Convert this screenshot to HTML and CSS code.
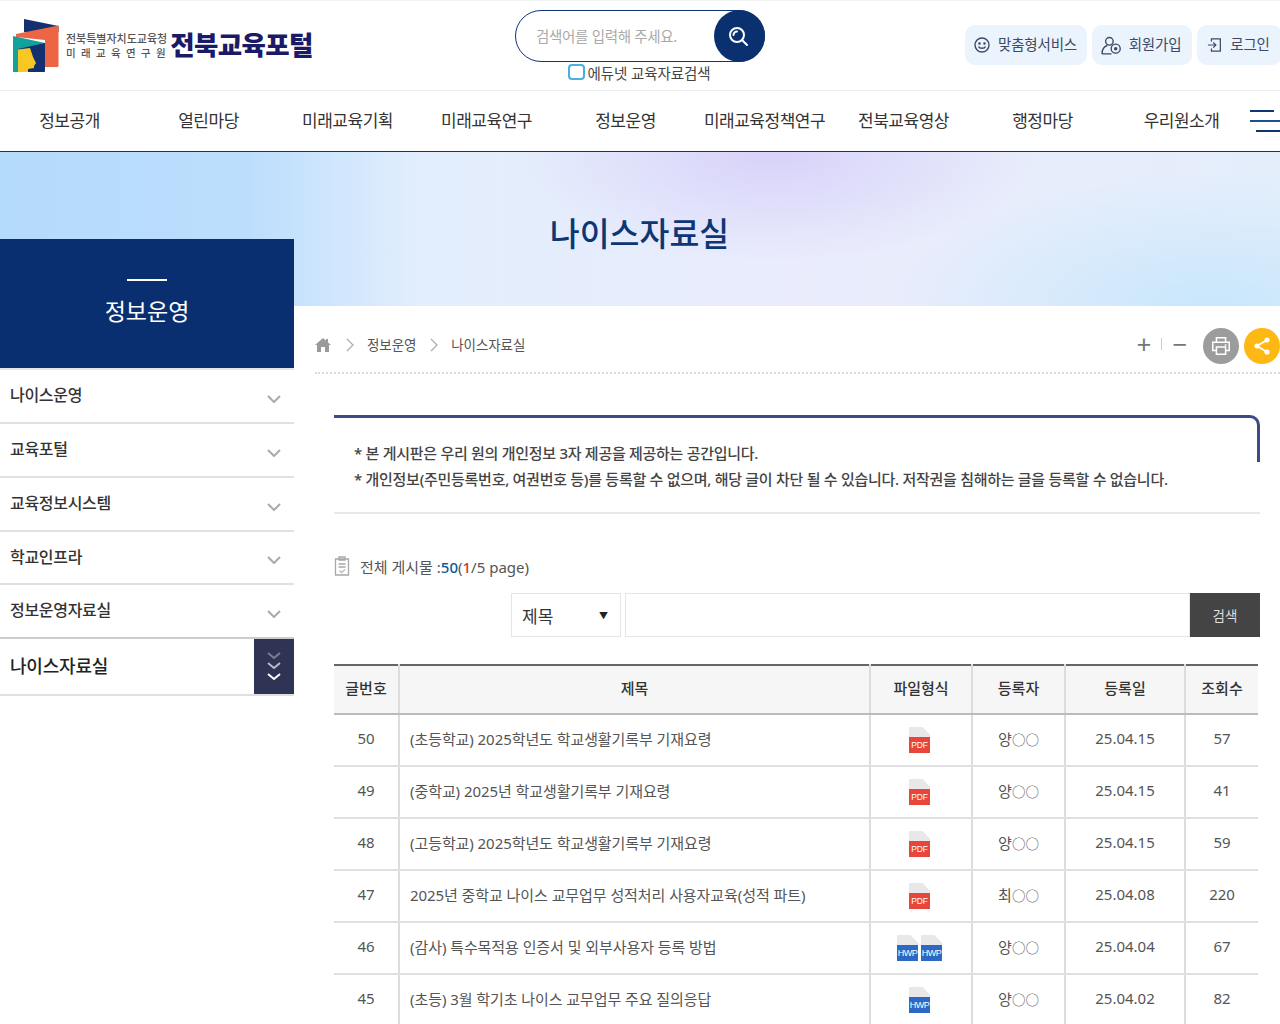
FILE: index.html
```html
<!DOCTYPE html>
<html lang="ko">
<head>
<meta charset="utf-8">
<title>나이스자료실 - 전북교육포털</title>
<link rel="stylesheet" href="styles.css">
</head>
<body>
<header class="top">
  <a class="logo">
    <svg class="logo-mark" viewBox="12 18 48 56" width="48" height="56">
      <path d="M24 19 58.5 26V32H24Z" fill="#14306f"/>
      <path d="M16 34 58.5 25.5V66Q58.5 67 57 67H45V40L16 37Z" fill="#ec6545"/>
      <path d="M13 36 45 43V72H13Z" fill="#14a09b"/>
      <path d="M18 49 45 43V71Q45 72 43 72H18Z" fill="#14306f"/>
      <path d="M18 49.5 30 48 33 57 36 63 34 66V68L28 69V72H18Z" fill="#f7c823"/>
    </svg>
    <span class="logo-sub"><span>전북특별자치도교육청</span><span class="spaced">미 래 교 육 연 구 원</span></span>
    <span class="logo-name">전북교육포털</span>
  </a>
  <div class="search-col">
    <div class="search-pill">
      <span class="search-ph">검색어를 입력해 주세요.</span>
      <span class="search-btn">
        <svg viewBox="0 0 24 24" width="24" height="24" fill="none" stroke="#fff" stroke-width="2"><circle cx="11" cy="11" r="7"/><path d="M16 16l5 5M7.5 11a3.5 3.5 0 0 1 3.5-3.5" stroke-linecap="round"/></svg>
      </span>
    </div>
    <label class="edu"><span class="check"></span>에듀넷 교육자료검색</label>
  </div>
  <div class="quick">
    <a class="q q1"><svg viewBox="0 0 18 18" width="18" height="18" fill="none" stroke="#3c4a68" stroke-width="1.4"><circle cx="9" cy="9" r="7"/><circle cx="6.5" cy="7.5" r=".6"/><circle cx="11.5" cy="7.5" r=".6"/><path d="M5.5 10.5c1 2.4 6 2.4 7 0"/></svg>맞춤형서비스</a>
    <a class="q q2"><svg viewBox="0 0 20 18" width="21" height="19" fill="none" stroke="#3c4a68" stroke-width="1.3"><circle cx="8" cy="5" r="3.6"/><path d="M1 17c0-4 2-7 5-8M1 17h9"/><circle cx="14" cy="12" r="4.3"/><circle cx="14" cy="12" r="1" fill="#3c4a68"/></svg>회원가입</a>
    <a class="q q3"><svg viewBox="0 0 18 18" width="16" height="16" fill="none" stroke="#3c4a68" stroke-width="1.4"><path d="M5 5V2h10v14H5v-3M1 9h9M7 6l3 3-3 3"/></svg>로그인</a>
  </div>
</header>
<nav class="gnb">
  <a>정보공개</a><a>열린마당</a><a>미래교육기획</a><a>미래교육연구</a><a>정보운영</a><a>미래교육정책연구</a><a>전북교육영상</a><a>행정마당</a><a>우리원소개</a>
  <span class="burger"><i></i><i></i><i></i></span>
</nav>
<section class="hero"><h1>나이스자료실</h1></section>
<div class="layout">
  <aside class="side">
    <div class="side-title"><i></i><strong>정보운영</strong></div>
    <ul class="side-menu">
      <li><span>나이스운영</span><svg class="chev" viewBox="0 0 14 8" width="14" height="8"><path d="M1 1l6 6 6-6"/></svg></li>
      <li><span>교육포털</span><svg class="chev" viewBox="0 0 14 8" width="14" height="8"><path d="M1 1l6 6 6-6"/></svg></li>
      <li><span>교육정보시스템</span><svg class="chev" viewBox="0 0 14 8" width="14" height="8"><path d="M1 1l6 6 6-6"/></svg></li>
      <li><span>학교인프라</span><svg class="chev" viewBox="0 0 14 8" width="14" height="8"><path d="M1 1l6 6 6-6"/></svg></li>
      <li><span>정보운영자료실</span><svg class="chev" viewBox="0 0 14 8" width="14" height="8"><path d="M1 1l6 6 6-6"/></svg></li>
      <li class="on"><span>나이스자료실</span><b><svg viewBox="0 0 14 32" width="14" height="32" fill="none" stroke-width="2"><path d="M1 2l6 5 6-5" stroke="#7b7d94"/><path d="M1 12l6 5 6-5" stroke="#b9bac6"/><path d="M1 23l6 5 6-5" stroke="#fff"/></svg></b></li>
    </ul>
  </aside>
  <main class="main">
    <div class="crumbs">
      <svg class="home" viewBox="0 0 16 14" width="16" height="14"><path d="M8 0 0 7h2v7h4V9h4v5h4V7h2l-3-2.6V1h-2v1.7Z" fill="#9a9a9a"/></svg>
      <svg class="sep" viewBox="0 0 8 14" width="8" height="14"><path d="M1 1l6 6-6 6"/></svg>
      <span>정보운영</span>
      <svg class="sep" viewBox="0 0 8 14" width="8" height="14"><path d="M1 1l6 6-6 6"/></svg>
      <span>나이스자료실</span>
      <div class="tools">
        <span class="zoom">+</span><i class="zoom-sep"></i><span class="zoom">−</span>
        <span class="round print"><svg viewBox="0 0 24 24" width="22" height="22" fill="none" stroke="#fff" stroke-width="1.6"><path d="M7 8V3h10v5M7 17H3V8h18v9h-4M7 13h10v8H7Z"/><path d="M16 11h2"/></svg></span>
        <span class="round share"><svg viewBox="0 0 20 20" width="20" height="20" fill="#fff" stroke="#fff" stroke-width="1.8"><path d="M15 4 5 10l10 6" fill="none"/><circle cx="15" cy="4" r="1.7"/><circle cx="5" cy="10" r="1.7"/><circle cx="15" cy="16" r="1.7"/></svg></span>
      </div>
    </div>
    <div class="content">
      <div class="notice">
        <p>* 본 게시판은 우리 원의 개인정보 3자 제공을 제공하는 공간입니다.</p>
        <p>* 개인정보(주민등록번호, 여권번호 등)를 등록할 수 없으며, 해당 글이 차단 될 수 있습니다. 저작권을 침해하는 글을 등록할 수 없습니다.</p>
      </div>
      <div class="count">
        <svg viewBox="0 0 16 20" width="16" height="20" fill="none" stroke="#a8a8a8" stroke-width="1.3"><path d="M1.5 3h13v16h-13ZM5 1h6v3H5ZM4.5 8h7M4.5 11h7"/><path d="M5.5 14.5l2 2 3.5-3" stroke="#bbb"/></svg>
        <span>전체 게시물 :<em class="blue">50</em>(<em class="red">1</em>/5 page)</span>
      </div>
      <div class="filter">
        <div class="select"><span>제목</span><i>▼</i></div>
        <div class="field"></div>
        <a class="go">검색</a>
      </div>
      <table class="board">
        <colgroup><col class="c1"><col><col class="c3"><col class="c4"><col class="c5"><col class="c6"></colgroup>
        <thead><tr><th>글번호</th><th>제목</th><th>파일형식</th><th>등록자</th><th>등록일</th><th>조회수</th></tr></thead>
        <tbody>
          <tr><td>50</td><td class="tl">(초등학교) 2025학년도 학교생활기록부 기재요령</td><td><span class="file"><span class="doc pdf"><i>PDF</i></span></span></td><td>양<span class="mask">○○</span></td><td>25.04.15</td><td>57</td></tr>
          <tr><td>49</td><td class="tl">(중학교) 2025년 학교생활기록부 기재요령</td><td><span class="file"><span class="doc pdf"><i>PDF</i></span></span></td><td>양<span class="mask">○○</span></td><td>25.04.15</td><td>41</td></tr>
          <tr><td>48</td><td class="tl">(고등학교) 2025학년도 학교생활기록부 기재요령</td><td><span class="file"><span class="doc pdf"><i>PDF</i></span></span></td><td>양<span class="mask">○○</span></td><td>25.04.15</td><td>59</td></tr>
          <tr><td>47</td><td class="tl">2025년 중학교 나이스 교무업무 성적처리 사용자교육(성적 파트)</td><td><span class="file"><span class="doc pdf"><i>PDF</i></span></span></td><td>최<span class="mask">○○</span></td><td>25.04.08</td><td>220</td></tr>
          <tr><td>46</td><td class="tl">(감사) 특수목적용 인증서 및 외부사용자 등록 방법</td><td><span class="file"><span class="doc hwp"><i>HWP</i></span><span class="doc hwp"><i>HWP</i></span></span></td><td>양<span class="mask">○○</span></td><td>25.04.04</td><td>67</td></tr>
          <tr><td>45</td><td class="tl">(초등) 3월 학기초 나이스 교무업무 주요 질의응답</td><td><span class="file"><span class="doc hwp"><i>HWP</i></span></span></td><td>양<span class="mask">○○</span></td><td>25.04.02</td><td>82</td></tr>
        </tbody>
      </table>
    </div>
  </main>
</div>
</body>
</html>
```

FILE: styles.css
```css
* { box-sizing: border-box; }
html, body { margin: 0; padding: 0; }
body { width: 1280px; height: 1024px; overflow: hidden; background: #fff; color: #333; font-family: "Noto Sans", "Noto Sans CJK KR", sans-serif; font-size: 15px; }
i, em { font-style: normal; }
ul { list-style: none; margin: 0; padding: 0; }
p { margin: 0; }

.top { height: 91px; display: flex; align-items: flex-start; border-bottom: 1px solid #ececec; border-top: 1px solid #f4f4f4; position: relative; }
.logo { display: flex; align-items: flex-start; padding: 17px 0 0 12px; width: 515px; }
.logo-mark { flex: none; }
.logo-sub { display: flex; flex-direction: column; margin: 14px 0 0 6px; font-size: 11px; line-height: 14px; color: #555; letter-spacing: 0; white-space: nowrap; font-weight: 500; }
.logo-sub .spaced { letter-spacing: 1.3px; font-size: 10.5px; }
.logo-name { margin: 8px 0 0 3px; font-size: 26.5px; line-height: 38px; font-weight: 900; color: #1a1a66; letter-spacing: -.6px; white-space: nowrap; }

.search-col { width: 250px; padding-top: 9px; flex: none; }
.search-pill { height: 52px; border: 1px solid #0d3675; border-radius: 26px; display: flex; align-items: center; justify-content: space-between; padding-left: 20px; }
.search-ph { color: #aaa; font-size: 14.5px; letter-spacing: -.3px; margin-top: -2px; }
.search-btn { width: 51px; height: 52px; margin-right: -1px; padding-right: 3px; border-radius: 50%; background: #0a3070; display: flex; align-items: center; justify-content: center; }
.edu { display: flex; align-items: center; justify-content: center; height: 22px; margin-left: -2px; font-size: 14.5px; color: #444; letter-spacing: -.1px; margin-top: -1px; }
.check { width: 17px; height: 16px; border: 2px solid #4ab0e0; border-radius: 4px; margin-right: 3px; flex: none; }

.quick { display: flex; gap: 5px; margin-left: auto; margin-top: 24px; flex: none; margin-right: -2px; }
.q { height: 40px; border-radius: 10px; background: #ebf3fc; display: flex; align-items: center; justify-content: center; gap: 7px; font-size: 14.5px; color: #3c4a68; letter-spacing: -.2px; white-space: nowrap; padding: 0 2px 3px 0; }
.q svg { margin-top: 3px; }
.q1 { width: 122px; }
.q2 { width: 100px; }
.q3 { width: 85px; }

.gnb { height: 61px; display: flex; align-items: center; border-bottom: 1px solid #0d3675; position: relative; padding-bottom: 3px; }
.gnb a { width: 139px; flex: none; text-align: center; font-size: 17px; color: #333; letter-spacing: -.5px; white-space: nowrap; }
.burger { display: flex; flex-direction: column; gap: 8px; position: absolute; left: 1250px; top: 19px; width: 30px; }
.burger i { display: block; height: 2px; background: #0d3675; }
.burger i:nth-child(1) { width: 24px; }
.burger i:nth-child(2) { background: #1d4f94; }
.burger i:nth-child(3) { margin-left: 6px; }

.hero { height: 154px; background: radial-gradient(ellipse 260px 110px at 775px 0, #d7d2f9 0%, rgba(215, 210, 249, 0) 100%), radial-gradient(ellipse 320px 130px at 1210px 154px, #c9e7fb 0%, rgba(201, 231, 251, 0) 100%), linear-gradient(90deg, #b4dafc 0, #bcdefc 250px, #e2eefd 420px, #eaecfc 800px, #e4eefb 1280px); text-align: center; padding-top: 57px; }
.hero h1 { margin: 0 0 0 -1px; font-size: 32.5px; line-height: 50px; font-weight: 500; color: #0d3675; }

.layout { display: flex; align-items: flex-start; }
.side { width: 294px; flex: none; margin-top: -67px; position: relative; }
.side-title { height: 129px; background: #0a2f70; color: #fff; display: flex; flex-direction: column; align-items: center; padding-top: 40px; }
.side-title i { width: 40px; height: 2px; background: #fff; margin-bottom: 13px; }
.side-title strong { font-size: 23px; font-weight: 400; line-height: 34px; }
.side-menu { border-top: 2px solid #e6e6e6; }
.side-menu li { height: 54px; border-bottom: 2px solid #e0e0e0; display: flex; align-items: center; justify-content: space-between; padding: 0 0 4px 10px; font-size: 16px; font-weight: 500; color: #333; letter-spacing: -.3px; }
.side-menu li:nth-child(4) { height: 53px; }
.side-menu li:nth-child(5) { height: 54px; border-bottom-color: #ccc; }
.chev { margin: 9px 13px 0 0; fill: none; stroke: #aaa; stroke-width: 2; }
.side-menu .on { height: 57px; font-size: 18px; color: #222; padding: 0 0 0 10px; align-items: stretch; letter-spacing: -.2px; }
.side-menu .on span { align-self: center; margin-top: -4px; }
.side-menu .on b { width: 40px; background: #2f3354; display: flex; align-items: center; justify-content: center; }

.main { flex: 1; min-width: 0; padding-left: 21px; }
.crumbs { display: flex; align-items: center; height: 68px; padding-top: 12px; font-size: 13.5px; color: #555; border-bottom: 2px dotted #ddd; }
.home { margin: -1px 15px 0 0; }
.sep { fill: none; stroke: #aaa; stroke-width: 1.2; margin: -1px 13px 0 0; }
.crumbs > span { margin: -2px 14px 0 0; letter-spacing: -.1px; }
.tools { margin-left: auto; display: flex; align-items: center; margin-top: 2px; }
.zoom { font-size: 26px; line-height: 24px; width: 16px; text-align: center; color: #777; margin-top: -5px; }
.zoom-sep { width: 1px; height: 12px; background: #ccc; margin: -4px 10px 0 9px; }
.round { width: 36px; height: 36px; border-radius: 50%; display: flex; align-items: center; justify-content: center; }
.print { background: #9c9c9c; margin: 0 5px 0 15px; }
.share { background: #fdb813; }

.content { margin: 41px 20px 0 19px; }
.notice { position: relative; height: 99px; padding: 26px 0 0 20px; border-bottom: 2px solid #e8e8e8; font-size: 15px; line-height: 25.5px; font-weight: 500; color: #444; letter-spacing: -.28px; white-space: nowrap; }
.notice::before { content: ""; position: absolute; left: 0; right: 0; top: 0; height: 44px; border-top: 3px solid #3c4a85; border-right: 3px solid #3c4a85; border-top-right-radius: 10px; }
.count { display: flex; align-items: center; gap: 10px; margin-top: 41px; height: 22px; font-size: 15px; color: #555; }
.blue { color: #0a5aa0; font-weight: 500; }
.red { color: #d9302a; font-weight: 500; }
.filter { display: flex; margin-top: 16px; height: 44px; padding-left: 177px; }
.select { width: 110px; border: 1px solid #e6e6e6; display: flex; align-items: center; justify-content: space-between; padding: 0 12px 0 10px; font-size: 17px; color: #333; }
.select i { font-size: 9px; color: #222; }
.field { flex: 1; border: 1px solid #e6e6e6; margin-left: 4px; }
.go { width: 70px; background: #444; color: #ddd; font-size: 13.5px; display: flex; align-items: center; justify-content: center; }

.board { width: 924px; margin-top: 27px; border-collapse: collapse; table-layout: fixed; border-top: 2px solid #666; font-size: 15px; color: #555; }
.c1 { width: 65px; }
.c3 { width: 102px; }
.c4 { width: 93px; }
.c5 { width: 120px; }
.c6 { width: 73px; }
.board th { height: 49px; padding: 0 0 4px; background: #f6f6f6; font-weight: 500; color: #333; border-right: 2px solid #ddd; border-bottom: 2px solid #bbb; }
.board td { height: 52px; text-align: center; border-right: 2px solid #ddd; border-bottom: 2px solid #e0e0e0; padding: 0 0 4px; }
.board th:last-child, .board td:last-child { border-right: 0; }
.board .tl { text-align: left; padding-left: 10px; white-space: nowrap; letter-spacing: -.07px; }
.mask { font-size: 13.5px; font-family: "Noto Sans CJK KR", sans-serif; }
.file { display: flex; justify-content: center; gap: 3px; padding: 4px 3px 0 0; }
.doc { width: 21px; height: 26px; background: #e8e8ea; clip-path: polygon(0 0, 65% 0, 100% 30%, 100% 100%, 0 100%); position: relative; display: block; }
.doc i { position: absolute; left: 0; right: 0; bottom: 0; height: 16px; line-height: 17px; text-align: center; font-size: 8.5px; color: #fff; font-family: "Liberation Sans", sans-serif; letter-spacing: -.2px; }
.pdf i { background: #e8453c; }
.hwp i { background: #2c68c4; font-size: 9px; letter-spacing: -.5px; }
```
